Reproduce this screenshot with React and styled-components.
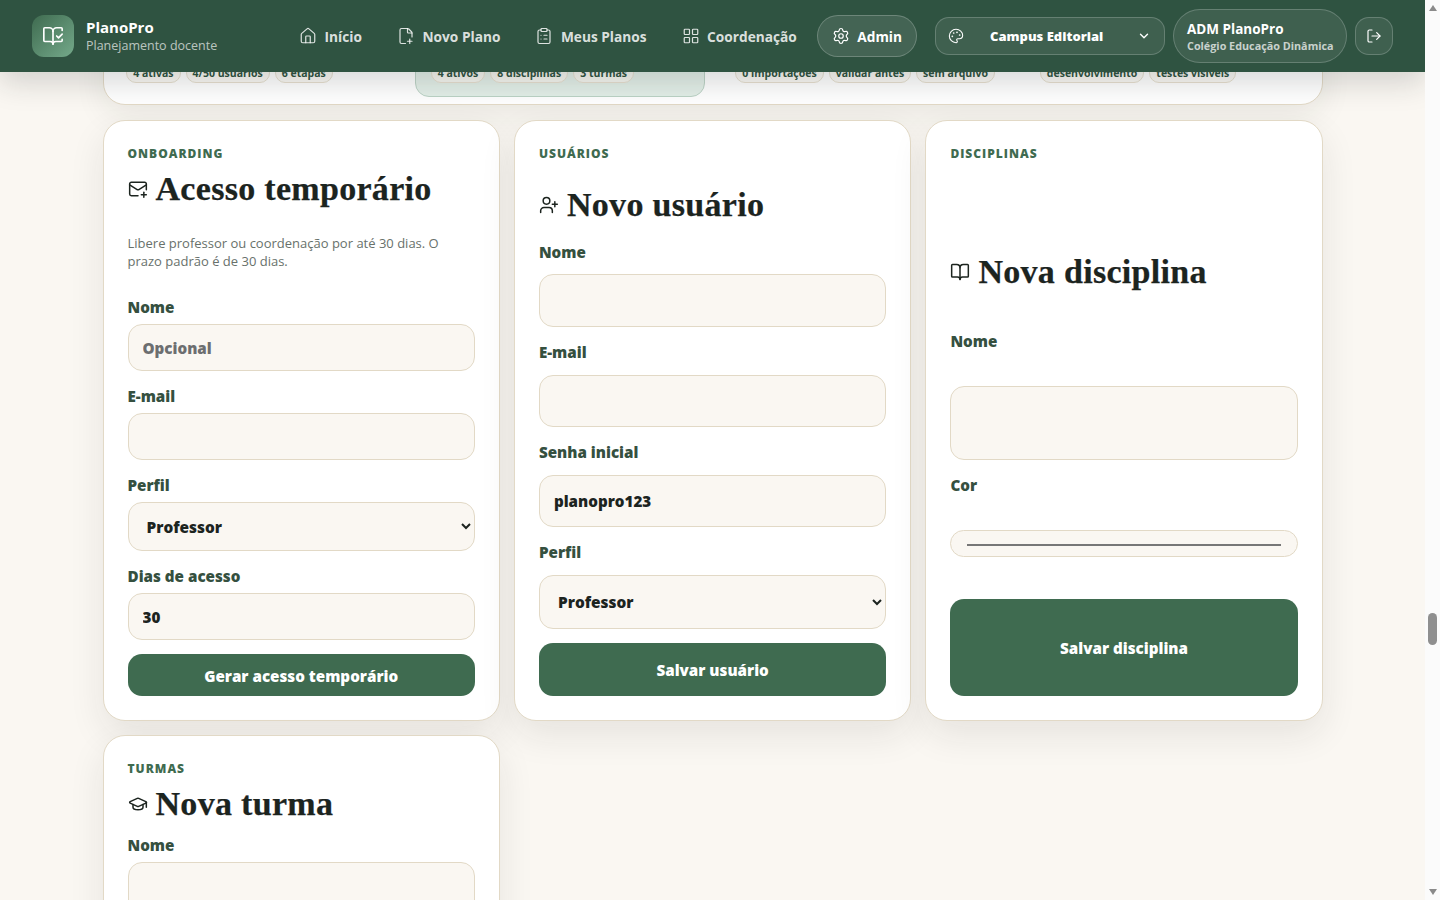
import React from "react";
import styled, { createGlobalStyle } from "styled-components";
import {
  BookOpenCheck, House, FilePlus2, ClipboardList, LayoutGrid, Settings, Palette,
  ChevronDown, LogOut, MailPlus, UserPlus, BookOpen, GraduationCap,
} from "lucide-react";

const Global = createGlobalStyle`
  * { box-sizing: border-box; }
  html, body { margin: 0; height: 900px; overflow: hidden; background: #faf7f2; }
  body { font-family: "Open Sans", "Liberation Sans", sans-serif; color: #1c241f; }
`;

const Shell = styled.div`display: flex; height: 900px; overflow: hidden;`;
const Page = styled.div`flex: 1; min-width: 0; height: 900px; overflow: hidden; background: #faf7f2;`;

const Track = styled.div`
  width: 15px; height: 900px; background: #fbfbfb; display: flex; flex-direction: column; align-items: center;
`;
const ArrowUp = styled.div`
  margin-top: 5px; width: 0; height: 0; border-left: 4.5px solid transparent; border-right: 4.5px solid transparent;
  border-bottom: 6px solid #8a8a8a;
`;
const Thumb = styled.div`margin-top: 602px; width: 9px; height: 32px; border-radius: 5px; background: #8f8f8f;`;
const ArrowDown = styled.div`
  margin-top: auto; margin-bottom: 5px; width: 0; height: 0; border-left: 4.5px solid transparent; border-right: 4.5px solid transparent;
  border-top: 6px solid #8a8a8a;
`;

const Header = styled.header`
  position: relative; z-index: 5; height: 72px; background: #2f5341; color: #fff; padding: 0 32px;
  display: flex; align-items: center; box-shadow: 0 10px 30px rgba(28, 36, 31, 0.18);
`;
const Brand = styled.div`display: flex; align-items: center; gap: 12px;`;
const Logo = styled.div`
  width: 42px; height: 42px; border-radius: 12px; display: grid; place-items: center;
  background: linear-gradient(135deg, #3f6b50, #74a98a);
`;
const BrandText = styled.div`display: flex; flex-direction: column;`;
const BrandName = styled.span`font-size: 15px; font-weight: 700; line-height: 20px;`;
const BrandSub = styled.span`font-size: 12.5px; line-height: 18px; color: rgba(255, 255, 255, 0.68);`;
const Nav = styled.nav`margin-left: auto; display: flex; align-items: center; gap: 5px;`;
const NavItem = styled.a`
  height: 42px; padding: 0 14px; display: flex; align-items: center; gap: 7.5px;
  font-size: 13.7px; font-weight: 700; border-radius: 21px;
  color: ${(p) => (p.$active ? "#fff" : "rgba(255,255,255,0.84)")};
  background: ${(p) => (p.$active ? "rgba(255,255,255,0.1)" : "transparent")};
  border: 1px solid ${(p) => (p.$active ? "rgba(255,255,255,0.22)" : "transparent")};
`;
const Campus = styled.div`
  margin-left: 18px; width: 230px; height: 38px; border-radius: 14px; padding: 0 13px 0 12px;
  background: rgba(255, 255, 255, 0.08); border: 1px solid rgba(255, 255, 255, 0.2);
  display: flex; align-items: center; font-size: 13px; font-weight: 800;
`;
const CampusName = styled.span`margin: 0 auto 0 26px;`;
const UserPill = styled.div`
  margin-left: 8px; width: 174px; height: 54px; border-radius: 27px; padding: 0 13px;
  background: rgba(255, 255, 255, 0.08); border: 1px solid rgba(255, 255, 255, 0.2);
  display: flex; flex-direction: column; justify-content: center;
`;
const UserName = styled.span`font-size: 13.5px; font-weight: 700; line-height: 18px;`;
const UserOrg = styled.span`font-size: 10.8px; font-weight: 700; line-height: 15px; color: rgba(255, 255, 255, 0.72); white-space: nowrap;`;
const IconBtn = styled.button`
  margin-left: 8px; width: 38px; height: 38px; border-radius: 14px; color: #fff; display: grid; place-items: center; padding: 0;
  background: rgba(255, 255, 255, 0.08); border: 1px solid rgba(255, 255, 255, 0.2);
`;

const Main = styled.main`width: 1220.2px; margin: 0 0 0 102.5px;`;
const Summary = styled.section`
  margin-top: -45px; height: 78px; padding: 7.2px; background: #fff; border: 1px solid #e2d9c6; border-radius: 22px;
  display: grid; grid-template-columns: repeat(4, minmax(0, 1fr)); gap: 14.4px;
  box-shadow: 0 12px 32px rgba(28, 36, 31, 0.07);
`;
const Tile = styled.div`
  padding: 0 14.5px 12.5px; border-radius: 14px; display: flex; align-items: flex-end; gap: 5px;
  background: ${(p) => (p.$active ? "#e3efe8" : "transparent")};
  border: 1px solid ${(p) => (p.$active ? "#bdd3c6" : "transparent")};
`;
const Chip = styled.span`
  height: 20px; padding: 0 6px; border-radius: 10px; font-size: 10.5px; font-weight: 700; line-height: 18px;
  color: #2f5341; background: rgba(249, 246, 240, 0.8); border: 1px solid #e7e0d0; white-space: nowrap;
`;

const Grid = styled.div`
  margin-top: 15px; display: grid; grid-template-columns: repeat(3, minmax(0, 1fr));
  column-gap: 14.15px; row-gap: 14.4px; align-items: start;
`;
const Card = styled.section`
  height: ${(p) => p.$h || "600.6px"}; padding: 24px; background: #fff; border: 1px solid #e2d9c6; border-radius: 22px;
  display: flex; flex-direction: column; box-shadow: 0 14px 36px rgba(28, 36, 31, 0.09);
`;
const Eyebrow = styled.div`
  font-size: 12px; line-height: 18px; font-weight: 800; letter-spacing: 1px; text-transform: uppercase; color: #3f6b50;
`;
const Title = styled.h2`
  margin: ${(p) => p.$top - 2}px 0 0; height: 36px; display: flex; align-items: center; gap: 8px;
  font-family: "Liberation Serif", serif; font-size: 34px; letter-spacing: 0.3px; line-height: 36px; font-weight: 700;
  color: #1c241f; white-space: nowrap; -webkit-text-stroke: 0.25px #1c241f;
  svg { -webkit-text-stroke: 0; }
`;
const Lead = styled.p`margin: 27px 0 0; font-size: 13px; line-height: 18px; color: #68716b;`;
const Label = styled.label`
  display: block; margin-top: ${(p) => p.$top}px; font-size: 15.2px; line-height: 20px; font-weight: 800; color: #35503f;
`;
const Input = styled.input`
  display: block; width: 100%; flex: none; margin-top: ${(p) => p.$top}px; height: ${(p) => p.$h}px; padding: 0 14px;
  background: #faf7f2; border: 1px solid #e2d9c6; border-radius: 14px; outline: none;
  font-family: inherit; font-size: 15.2px; font-weight: 800; color: #1c241f;
  &::placeholder { color: #6c6e70; opacity: 1; }
`;
const Select = styled.select`
  display: block; width: 100%; flex: none; margin-top: ${(p) => p.$top}px; height: ${(p) => p.$h}px; padding: 1px 14px 0;
  background: #faf7f2; border: 1px solid #e2d9c6; border-radius: 14px; outline: none;
  font-family: inherit; font-size: 15.4px; font-weight: 800; color: #1c241f;
`;
const Color = styled.input`
  display: block; width: 100%; flex: none; margin-top: ${(p) => p.$top}px; height: ${(p) => p.$h}px; padding: 12px 14px;
  background: #faf7f2; border: 1px solid #e2d9c6; border-radius: 14px; outline: none;
`;
const Submit = styled.button`
  display: block; width: 100%; flex: none; margin-top: ${(p) => p.$top}px; height: ${(p) => p.$h}px; padding: 1px 0 0;
  background: #3f6b50; border: 0; border-radius: 14px; color: #fff;
  font-family: inherit; font-size: 15.2px; font-weight: 800;
`;

const chips = [
  ["4 ativas", "4/50 usuários", "6 etapas"],
  ["4 ativos", "8 disciplinas", "3 turmas"],
  ["0 importações", "validar antes", "sem arquivo"],
  ["desenvolvimento", "testes visíveis"],
];
const nav = [
  [House, "Início"], [FilePlus2, "Novo Plano"], [ClipboardList, "Meus Planos"], [LayoutGrid, "Coordenação"],
];

export default function App() {
  return (
    <Shell>
      <Global />
      <Page>
        <Header>
          <Brand>
            <Logo><BookOpenCheck size={22} strokeWidth={1.8} color="#fff" /></Logo>
            <BrandText>
              <BrandName>PlanoPro</BrandName>
              <BrandSub>Planejamento docente</BrandSub>
            </BrandText>
          </Brand>
          <Nav>
            {nav.map(([Icon, label]) => (
              <NavItem key={label}><Icon size={18} strokeWidth={1.6} />{label}</NavItem>
            ))}
            <NavItem $active><Settings size={18} strokeWidth={1.6} />Admin</NavItem>
          </Nav>
          <Campus>
            <Palette size={16} strokeWidth={1.6} />
            <CampusName>Campus Editorial</CampusName>
            <ChevronDown size={14} strokeWidth={2.4} />
          </Campus>
          <UserPill>
            <UserName>ADM PlanoPro</UserName>
            <UserOrg>Colégio Educação Dinâmica</UserOrg>
          </UserPill>
          <IconBtn aria-label="Sair"><LogOut size={16} strokeWidth={1.8} /></IconBtn>
        </Header>
        <Main>
          <Summary>
            {chips.map((group, i) => (
              <Tile key={i} $active={i === 1}>
                {group.map((c) => <Chip key={c}>{c}</Chip>)}
              </Tile>
            ))}
          </Summary>
          <Grid>
            <Card>
              <Eyebrow>Onboarding</Eyebrow>
              <Title $top={10}><MailPlus size={20} strokeWidth={1.8} />Acesso temporário</Title>
              <Lead>Libere professor ou coordenação por até 30 dias. O prazo padrão é de 30 dias.</Lead>
              <Label $top={27}>Nome</Label>
              <Input $top={7} $h={47} placeholder="Opcional" />
              <Label $top={15}>E-mail</Label>
              <Input $top={7} $h={47} />
              <Label $top={15}>Perfil</Label>
              <Select $top={7} $h={49} defaultValue="Professor"><option>Professor</option><option>Coordenação</option></Select>
              <Label $top={15}>Dias de acesso</Label>
              <Input $top={7} $h={47} defaultValue="30" />
              <Submit $top={14} $h={42}>Gerar acesso temporário</Submit>
            </Card>
            <Card>
              <Eyebrow>Usuários</Eyebrow>
              <Title $top={26}><UserPlus size={20} strokeWidth={1.8} />Novo usuário</Title>
              <Label $top={19}>Nome</Label>
              <Input $top={12} $h={53} />
              <Label $top={15}>E-mail</Label>
              <Input $top={13} $h={52} />
              <Label $top={15}>Senha inicial</Label>
              <Input $top={13} $h={52} defaultValue="planopro123" />
              <Label $top={15}>Perfil</Label>
              <Select $top={13} $h={54} defaultValue="Professor"><option>Professor</option><option>Coordenação</option></Select>
              <Submit $top={14} $h={53}>Salvar usuário</Submit>
            </Card>
            <Card>
              <Eyebrow>Disciplinas</Eyebrow>
              <Title $top={93}><BookOpen size={20} strokeWidth={1.8} />Nova disciplina</Title>
              <Label $top={41}>Nome</Label>
              <Input $top={35} $h={74} />
              <Label $top={15}>Cor</Label>
              <Color $top={35} $h={27} type="color" defaultValue="#767676" />
              <Submit $top={42} $h={97}>Salvar disciplina</Submit>
            </Card>
            <Card $h="400px">
              <Eyebrow>Turmas</Eyebrow>
              <Title $top={10}><GraduationCap size={20} strokeWidth={1.8} />Nova turma</Title>
              <Label $top={13}>Nome</Label>
              <Input $top={7} $h={53} />
            </Card>
          </Grid>
        </Main>
      </Page>
      <Track>
        <ArrowUp />
        <Thumb />
        <ArrowDown />
      </Track>
    </Shell>
  );
}
